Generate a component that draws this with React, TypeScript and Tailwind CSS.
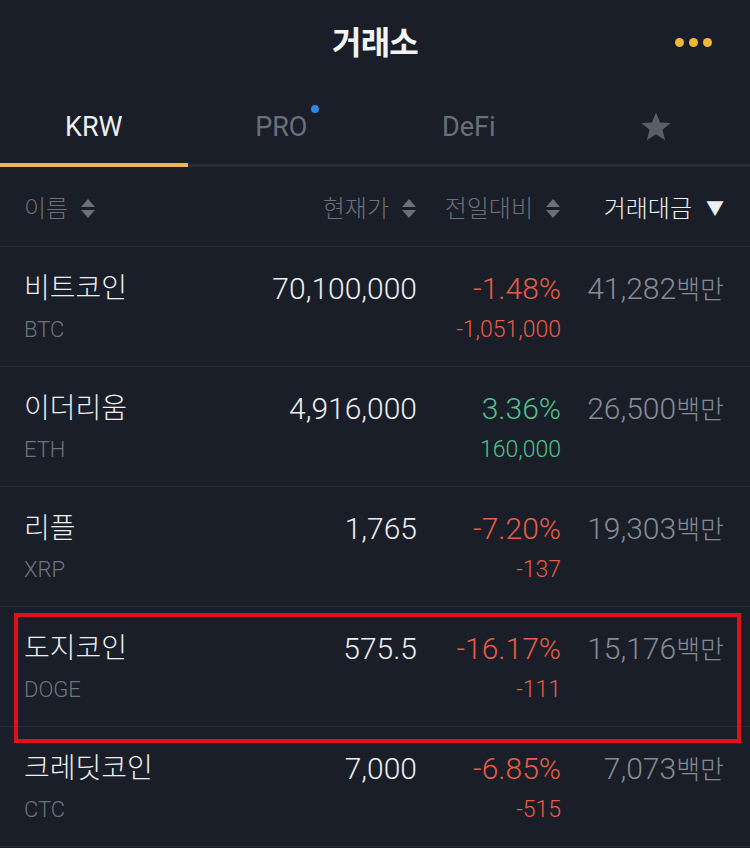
import React from 'react';

type Coin = {
  name: string;
  symbol: string;
  price: string;
  pct: string;
  diff: string;
  volume: string;
  up: boolean;
};

const coins: Coin[] = [
  { name: '비트코인', symbol: 'BTC', price: '70,100,000', pct: '-1.48%', diff: '-1,051,000', volume: '41,282', up: false },
  { name: '이더리움', symbol: 'ETH', price: '4,916,000', pct: '3.36%', diff: '160,000', volume: '26,500', up: true },
  { name: '리플', symbol: 'XRP', price: '1,765', pct: '-7.20%', diff: '-137', volume: '19,303', up: false },
  { name: '도지코인', symbol: 'DOGE', price: '575.5', pct: '-16.17%', diff: '-111', volume: '15,176', up: false },
  { name: '크레딧코인', symbol: 'CTC', price: '7,000', pct: '-6.85%', diff: '-515', volume: '7,073', up: false },
];

const SortIcon = () => (
  <svg width="16" height="22" viewBox="0 0 16 22" className="ml-3">
    <path d="M8 1 L15 9 L1 9 Z" fill="#6b6f78" />
    <path d="M1 12 L15 12 L8 20 Z" fill="#6b6f78" />
  </svg>
);

const App = () => {
  return (
    <div
      className="relative w-[750px] h-[848px] overflow-hidden bg-[#1a1e28] text-white"
      style={{ fontFamily: "Roboto, 'Noto Sans CJK KR', sans-serif" }}
    >
      {/* top bar */}
      <div className="relative h-[86px] flex items-center justify-center">
        <span className="text-[32px] font-bold tracking-tight text-[#f2f3f5]">거래소</span>
        <div className="absolute right-[38px] top-[38px] flex gap-[5px]">
          <span className="w-[9px] h-[9px] rounded-full bg-[#f2b53c]" />
          <span className="w-[9px] h-[9px] rounded-full bg-[#f2b53c]" />
          <span className="w-[9px] h-[9px] rounded-full bg-[#f2b53c]" />
        </div>
      </div>

      {/* tabs */}
      <div className="grid grid-cols-4 h-[81px] border-b-[3px] border-[#272b35]">
        <div className="relative flex items-center justify-center pt-1">
          <span className="text-[27px] text-[#eceef0]">KRW</span>
          <div className="absolute left-0 right-0 -bottom-[3px] h-[4px] bg-[#e9b65c]" />
        </div>
        <div className="flex items-center justify-center pt-1">
          <span className="relative text-[27px] text-[#6b6f78]">
            PRO
            <span className="absolute -right-[12px] top-[-2px] w-[8px] h-[8px] rounded-full bg-[#2d87e6]" />
          </span>
        </div>
        <div className="flex items-center justify-center pt-1">
          <span className="text-[27px] text-[#6b6f78]">DeFi</span>
        </div>
        <div className="flex items-center justify-center pt-1">
          <svg width="34" height="32" viewBox="0 0 24 23">
            <path
              d="M12 1 L14.9 8.2 L22.6 8.6 L16.6 13.5 L18.6 21 L12 16.8 L5.4 21 L7.4 13.5 L1.4 8.6 L9.1 8.2 Z"
              fill="#5a5e69"
            />
          </svg>
        </div>
      </div>

      {/* column headers */}
      <div className="grid grid-cols-[193px_200px_144px_163px] pl-6 h-[80px] items-center border-b border-[#262a34] text-[24px] font-light text-[#6b6f78]">
        <div className="flex items-center pt-1">
          <span>이름</span>
          <SortIcon />
        </div>
        <div className="flex items-center justify-end pt-1">
          <span>현재가</span>
          <SortIcon />
        </div>
        <div className="flex items-center justify-end pt-1">
          <span>전일대비</span>
          <SortIcon />
        </div>
        <div className="flex items-center justify-end pt-1 text-[#eceef0]">
          <span>거래대금</span>
          <span className="ml-[14px] text-[18px]">▼</span>
        </div>
      </div>

      {/* rows */}
      {coins.map((c) => {
        const color = c.up ? 'text-[#4dc28a]' : 'text-[#e85b44]';
        return (
          <div
            key={c.symbol}
            className="grid grid-cols-[193px_200px_144px_163px] pl-6 h-[120px] pt-[25px] border-b border-[#262a34] font-light"
          >
            <div className="flex flex-col">
              <span className="text-[28px] leading-[34px] text-[#eceef0]">{c.name}</span>
              <span className="text-[22px] leading-[28px] mt-[10px] text-[#6f737c]">{c.symbol}</span>
            </div>
            <div className="text-right">
              <span className="text-[30px] leading-[34px] text-[#eceef0]">{c.price}</span>
            </div>
            <div className="flex flex-col items-end">
              <span className={`text-[30px] leading-[34px] ${color}`}>{c.pct}</span>
              <span className={`text-[23px] leading-[28px] mt-[10px] ${color}`}>{c.diff}</span>
            </div>
            <div className="text-right text-[#878b93] leading-[34px]">
              <span className="text-[30px]">{c.volume}</span>
              <span className="text-[26px]">백만</span>
            </div>
          </div>
        );
      })}

      {/* highlight box */}
      <div className="absolute left-[14px] top-[613px] w-[727px] h-[130px] border-[4px] border-[#e0111c] pointer-events-none" />
    </div>
  );
};

export default App;
